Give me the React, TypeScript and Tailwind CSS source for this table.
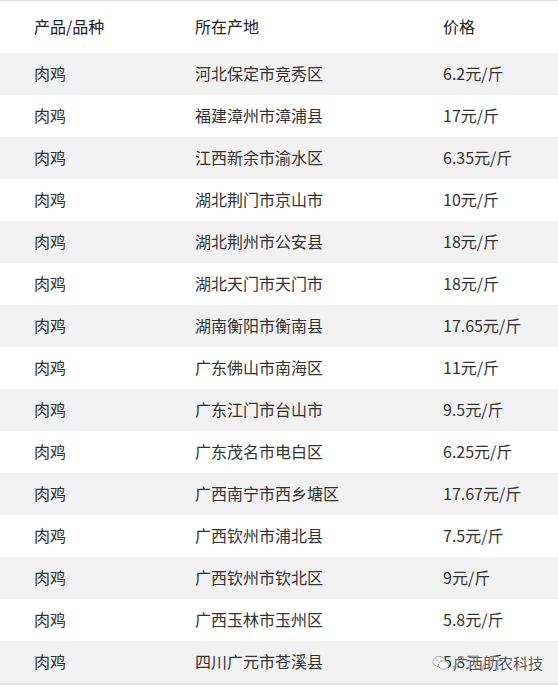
const rows: [string, string, string][] = [
  ["肉鸡", "河北保定市竞秀区", "6.2元/斤"],
  ["肉鸡", "福建漳州市漳浦县", "17元/斤"],
  ["肉鸡", "江西新余市渝水区", "6.35元/斤"],
  ["肉鸡", "湖北荆门市京山市", "10元/斤"],
  ["肉鸡", "湖北荆州市公安县", "18元/斤"],
  ["肉鸡", "湖北天门市天门市", "18元/斤"],
  ["肉鸡", "湖南衡阳市衡南县", "17.65元/斤"],
  ["肉鸡", "广东佛山市南海区", "11元/斤"],
  ["肉鸡", "广东江门市台山市", "9.5元/斤"],
  ["肉鸡", "广东茂名市电白区", "6.25元/斤"],
  ["肉鸡", "广西南宁市西乡塘区", "17.67元/斤"],
  ["肉鸡", "广西钦州市浦北县", "7.5元/斤"],
  ["肉鸡", "广西钦州市钦北区", "9元/斤"],
  ["肉鸡", "广西玉林市玉州区", "5.8元/斤"],
  ["肉鸡", "四川广元市苍溪县", "5.8元/斤"],
]

function WechatIcon() {
  return (
    <svg width="18" height="16" viewBox="0 0 18 16" fill="none">
      <ellipse cx="7" cy="6.5" rx="6" ry="5" fill="#fff" stroke="#aaa" strokeWidth="1" />
      <ellipse cx="11.5" cy="10" rx="5" ry="4.2" fill="#fff" stroke="#aaa" strokeWidth="1" />
      <circle cx="5" cy="5.5" r="0.8" fill="#999" />
      <circle cx="9" cy="5.5" r="0.8" fill="#999" />
    </svg>
  )
}

export default function App() {
  return (
    <div
      className="w-[558px] bg-white text-[16px] text-[#333]"
      style={{ fontFamily: '"Noto Sans CJK SC", "Noto Sans", sans-serif' }}
    >
      <div className="border-t border-[#dedede] border-b-2 border-b-[#e2e2e2]">
        <div className="grid h-[52px] grid-cols-[195px_248px_1fr] items-center pb-[2px] text-[#222]">
          <div className="pl-[34px]">产品/品种</div>
          <div>所在产地</div>
          <div>价格</div>
        </div>
        {rows.map((r, i) => (
          <div
            key={i}
            className={`relative grid h-[42px] grid-cols-[195px_248px_1fr] items-center pb-[2px] ${
              i % 2 === 0 ? "bg-[#f2f2f2]" : "bg-white"
            }`}
          >
            <div className="pl-[34px]">{r[0]}</div>
            <div>{r[1]}</div>
            <div>{r[2]}</div>
            {i === rows.length - 1 && (
              <div className="absolute left-[432px] top-[11px] flex items-center gap-[3px] text-[15px] text-[#555] [text-shadow:0_0_2px_#fff,0_0_2px_#fff,0_0_3px_#fff]">
                <WechatIcon />
                <span>广西助农科技</span>
              </div>
            )}
          </div>
        ))}
      </div>
    </div>
  )
}
